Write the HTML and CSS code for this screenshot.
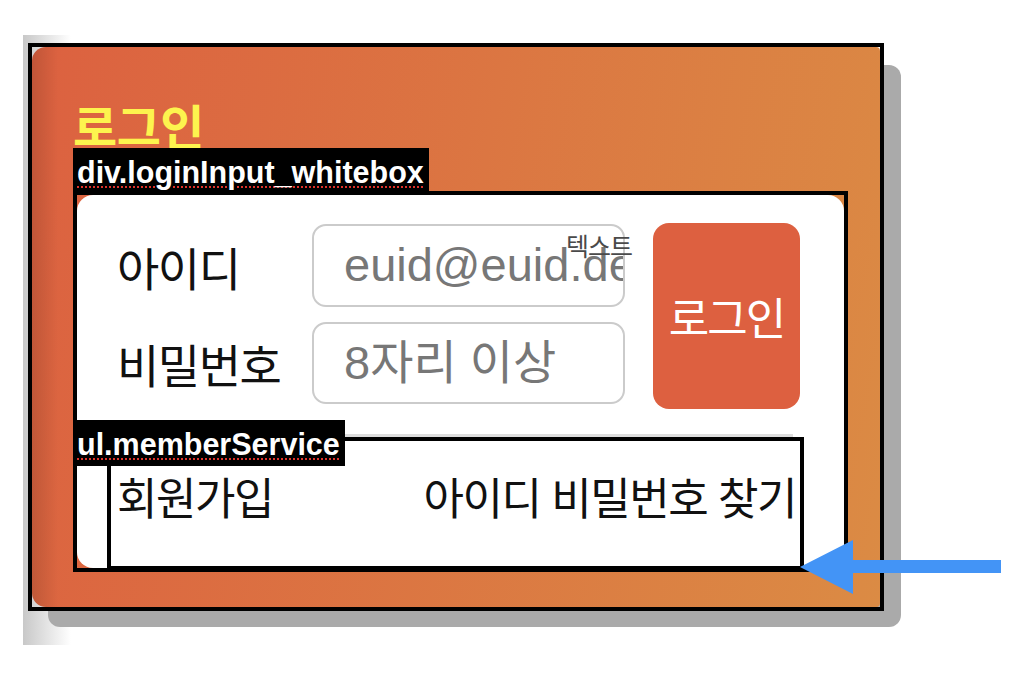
FILE: index.html
```html
<!DOCTYPE html>
<html lang="ko">
<head>
  <meta charset="UTF-8">
  <title>로그인</title>
  <meta name="viewport" content="width=device-width, initial-scale=1.0" />
  <link rel="stylesheet" href="styles.css">
</head>
<body>

  <div class="stage">
    <div class="frame">
      <div class="login-card">
        <h1>로그인</h1>

        <div class="whitebox-frame">
          <span class="tag">div.loginInput_whitebox</span>
          <div class="loginInput_whitebox">
            <form class="login-form">
              <label for="uid">아이디</label>
              <input type="text" id="uid" placeholder="euid@euid.de" />
              <button type="button" class="login-btn">로그인</button>
              <label for="upw">비밀번호</label>
              <input type="password" id="upw" placeholder="8자리 이상" />
              <span class="input-note">텍스트</span>
            </form>

            <ul class="memberService">
              <span class="tag tag-ul">ul.memberService</span>
              <li>회원가입</li>
              <li>아이디 비밀번호 찾기</li>
            </ul>
          </div>
        </div>
      </div>
    </div>

    <svg class="pointer" width="205" height="54" viewBox="0 0 205 54">
      <polygon points="0,27 53,0 53,20 201,20 201,33 53,33 53,54" fill="#4394f6" />
    </svg>
  </div>

</body>
</html>
```

FILE: styles.css
```css
* {
  box-sizing: border-box;
}

body {
  margin: 0;
  background-color: white;
  font-family: "Noto Sans CJK KR", sans-serif;
  color: #111;
}

/* area gris a la izquierda */
.stage {
  position: relative;
  z-index: 0;
  margin: 35px 0 0 23px;
  padding: 8px 0 34px 5px;
  background: linear-gradient(to right, #c8c8c8, #fff 48px);
}

.frame {
  position: relative;
  width: 856px;
  height: 568px;
  border: 4px solid #000;
}

.frame::before {
  content: "";
  position: absolute;
  left: 16px;
  top: 18px;
  right: -21px;
  bottom: -20px;
  background-color: #aaa;
  border-radius: 12px;
  z-index: -1;
}

.login-card {
  height: 100%;
  padding: 53px 0 0 41px;
  border-radius: 14px 4px 4px 14px;
  background:
    linear-gradient(to right, rgba(0, 0, 0, 0.13), rgba(0, 0, 0, 0) 26px),
    linear-gradient(100deg, #dc6140, #db8b44);
}

h1 {
  margin: 0 0 43px;
  font-size: 48px;
  line-height: 48px;
  font-weight: bold;
  letter-spacing: -0.5px;
  color: #fdf44e;
}

.whitebox-frame {
  position: relative;
  width: 775px;
  height: 381px;
  border: 4px solid #000;
}

.tag {
  position: absolute;
  left: -4px;
  top: -47px;
  height: 47px;
  padding: 2px 5px 0 4px;
  background-color: #000;
  color: #fff;
  font-family: "Liberation Sans", Arial, sans-serif;
  font-size: 30.5px;
  font-weight: bold;
  line-height: 45px;
  white-space: nowrap;
  text-decoration: underline dotted #e0332b;
  text-decoration-thickness: 2px;
  text-underline-offset: 3px;
  z-index: 2;
}

.tag-ul {
  left: -38px;
  top: -21px;
  height: 46px;
}

.loginInput_whitebox {
  height: 100%;
  background-color: white;
  border-radius: 16px;
}

.login-form {
  position: relative;
  display: grid;
  grid-template-columns: 167px 313px 147px;
  grid-template-rows: 83px 82px;
  column-gap: 28px;
  row-gap: 15px;
  width: 716px;
  padding: 29px 0 30px 40px;
  border-bottom: 3px solid #ddd;
}

.login-form label {
  align-self: center;
  font-size: 46px;
  line-height: 1;
  letter-spacing: -1.5px;
  color: #111;
  white-space: nowrap;
}

.login-form input {
  width: 100%;
  height: 100%;
  padding: 0 0 2px 30px;
  border: 2px solid #cbcbcb;
  border-radius: 14px;
  font-family: "Liberation Sans", "Noto Sans CJK KR", sans-serif;
  font-size: 47px;
  color: #333;
  outline: none;
}

.login-form input::placeholder {
  color: #777;
}

.login-btn {
  grid-column: 3;
  grid-row: 1 / 3;
  margin: -1px 0 -5px;
  border: none;
  border-radius: 16px;
  background-color: #dd6040;
  color: white;
  font-family: "Noto Sans CJK KR", sans-serif;
  font-size: 44px;
  letter-spacing: -2px;
  cursor: pointer;
}

.input-note {
  position: absolute;
  left: 489px;
  top: 38px;
  font-size: 25px;
  line-height: 1;
  letter-spacing: -1px;
  color: #4a4a4a;
}

.memberService {
  position: relative;
  display: flex;
  justify-content: space-between;
  width: 697px;
  height: 133px;
  margin: 0 0 0 30px;
  padding: 33px 4px 0 6px;
  border: 4px solid #000;
  list-style: none;
}

.memberService li {
  font-size: 44px;
  line-height: 1;
  letter-spacing: -1.5px;
  color: #111;
}

.pointer {
  position: absolute;
  left: 777px;
  top: 505px;
}
```
